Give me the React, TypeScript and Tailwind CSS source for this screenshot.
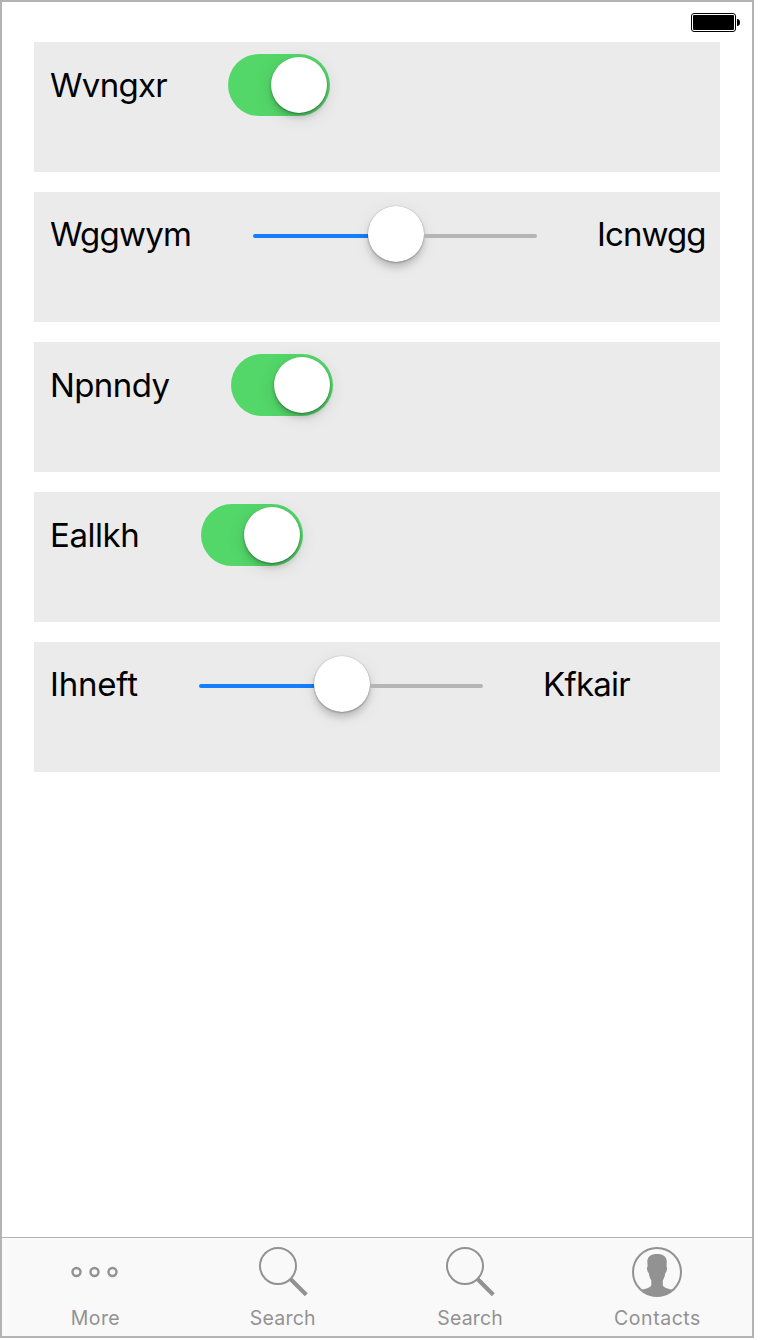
import type { ReactNode } from "react";

function Switch() {
  return (
    <div className="flex h-[62px] w-[102px] shrink-0 items-center justify-end rounded-full bg-[#53d769] pr-[3px]">
      <div className="size-14 rounded-full bg-white shadow-[0_1px_2px_rgba(0,0,0,0.35),0_5px_5px_rgba(0,0,0,0.12),0_4px_18px_rgba(0,0,0,0.12)]" />
    </div>
  );
}

function Slider() {
  return (
    <div className="flex h-[62px] w-[284px] shrink-0 items-center">
      <div className="mt-[2px] h-1 w-[115px] rounded-l-full bg-[#157efb]" />
      <div className="-mt-[2px] size-14 rounded-full bg-white shadow-[0_0_1px_rgba(0,0,0,0.3),0_1px_2px_rgba(0,0,0,0.25),0_6px_6px_rgba(0,0,0,0.14),0_4px_18px_rgba(0,0,0,0.08)]" />
      <div className="mt-[2px] h-1 w-[113px] rounded-r-full bg-[#b5b5b5]" />
    </div>
  );
}

function Card({ children }: { children: ReactNode }) {
  return (
    <div className="flex h-[130px] items-start bg-[#ebebeb] pt-3 pl-4 text-[33px] leading-[60px] whitespace-nowrap">
      {children}
    </div>
  );
}

function SearchIcon() {
  return (
    <svg className="size-[50px]" viewBox="0 0 50 50" fill="none" stroke="#929292">
      <circle cx="20" cy="19" r="18" strokeWidth="2" />
      <path d="M32.5 32L48.3 47.8" strokeWidth="4.2" />
    </svg>
  );
}

function MoreIcon() {
  return (
    <svg className="size-[50px]" viewBox="0 0 50 50" fill="none" stroke="#929292" strokeWidth="2.4">
      <circle cx="5.5" cy="25" r="4" />
      <circle cx="23.5" cy="25" r="4" />
      <circle cx="41.5" cy="25" r="4" />
    </svg>
  );
}

function ContactsIcon() {
  return (
    <svg className="size-[50px]" viewBox="0 0 50 50" fill="none">
      <circle cx="25" cy="25" r="24" stroke="#929292" strokeWidth="2" />
      <path
        fill="#929292"
        d="M15.3 15C15.3 9.5 19 7 25 7S34.8 9.5 34.8 15L34.5 19.5C35.8 20.5 35 24.5 33.3 26C32.8 29.5 31.8 31.8 30.8 33.5V38.5C32 41 37 41.8 41.3 43C37 47 31 49.5 25 49.5S13 47 8.7 43C13 41.8 18 41 19.3 38.5V33.5C18.2 31.8 17.3 29.5 16.8 26C15 24.5 14.3 20.5 15.6 19.5Z"
      />
    </svg>
  );
}

function Tab({ label, spacing, children }: { label: string; spacing: string; children: ReactNode }) {
  return (
    <div className="flex w-[187px] flex-col items-center pt-[9px] text-[19.5px] leading-6 text-[#929292]">
      {children}
      <span className={`mt-[9px] ${spacing}`}>{label}</span>
    </div>
  );
}

export default function App() {
  return (
    <div className="h-[1340px] w-[760px] bg-white font-['Inter',sans-serif] text-black">
      <div className="flex h-[1338px] w-[754px] flex-col border-2 border-[#b3b3b3]">
        <div className="flex h-10 shrink-0 justify-end pt-[11px] pr-3">
          <svg className="h-[19px] w-[49px]" viewBox="0 0 49 19">
            <rect x="0.5" y="0.5" width="44" height="18" rx="2.5" fill="white" stroke="black" />
            <rect x="2" y="2" width="41" height="15" rx="1" fill="black" />
            <path d="M46 6C48 6 49 7.5 49 9.5S48 13 46 13Z" fill="black" />
          </svg>
        </div>
        <div className="flex flex-1 flex-col gap-5 px-8">
          <Card>
            <span className="w-[178px] pt-px tracking-[-0.7px]">Wvngxr</span>
            <Switch />
          </Card>
          <Card>
            <span className="w-[203px] tracking-[-0.75px]">Wggwym</span>
            <Slider />
            <span className="ml-[60px] tracking-[-0.9px]">Icnwgg</span>
          </Card>
          <Card>
            <span className="w-[181px] pt-px tracking-[-0.6px]">Npnndy</span>
            <Switch />
          </Card>
          <Card>
            <span className="w-[151px] pt-px tracking-[-0.45px]">Eallkh</span>
            <Switch />
          </Card>
          <Card>
            <span className="w-[149px] tracking-[-0.2px]">Ihneft</span>
            <Slider />
            <span className="ml-[60px] tracking-[-0.75px]">Kfkair</span>
          </Card>
        </div>
        <div className="flex h-[99px] shrink-0 justify-between border-t border-[#b3b3b3] bg-[#f9f9f9] pr-px">
          <Tab label="More" spacing="tracking-[0.4px]"><MoreIcon /></Tab>
          <Tab label="Search" spacing="tracking-[0.2px]"><SearchIcon /></Tab>
          <Tab label="Search" spacing="tracking-[0.2px]"><SearchIcon /></Tab>
          <Tab label="Contacts" spacing="tracking-[0.55px]"><ContactsIcon /></Tab>
        </div>
      </div>
    </div>
  );
}
